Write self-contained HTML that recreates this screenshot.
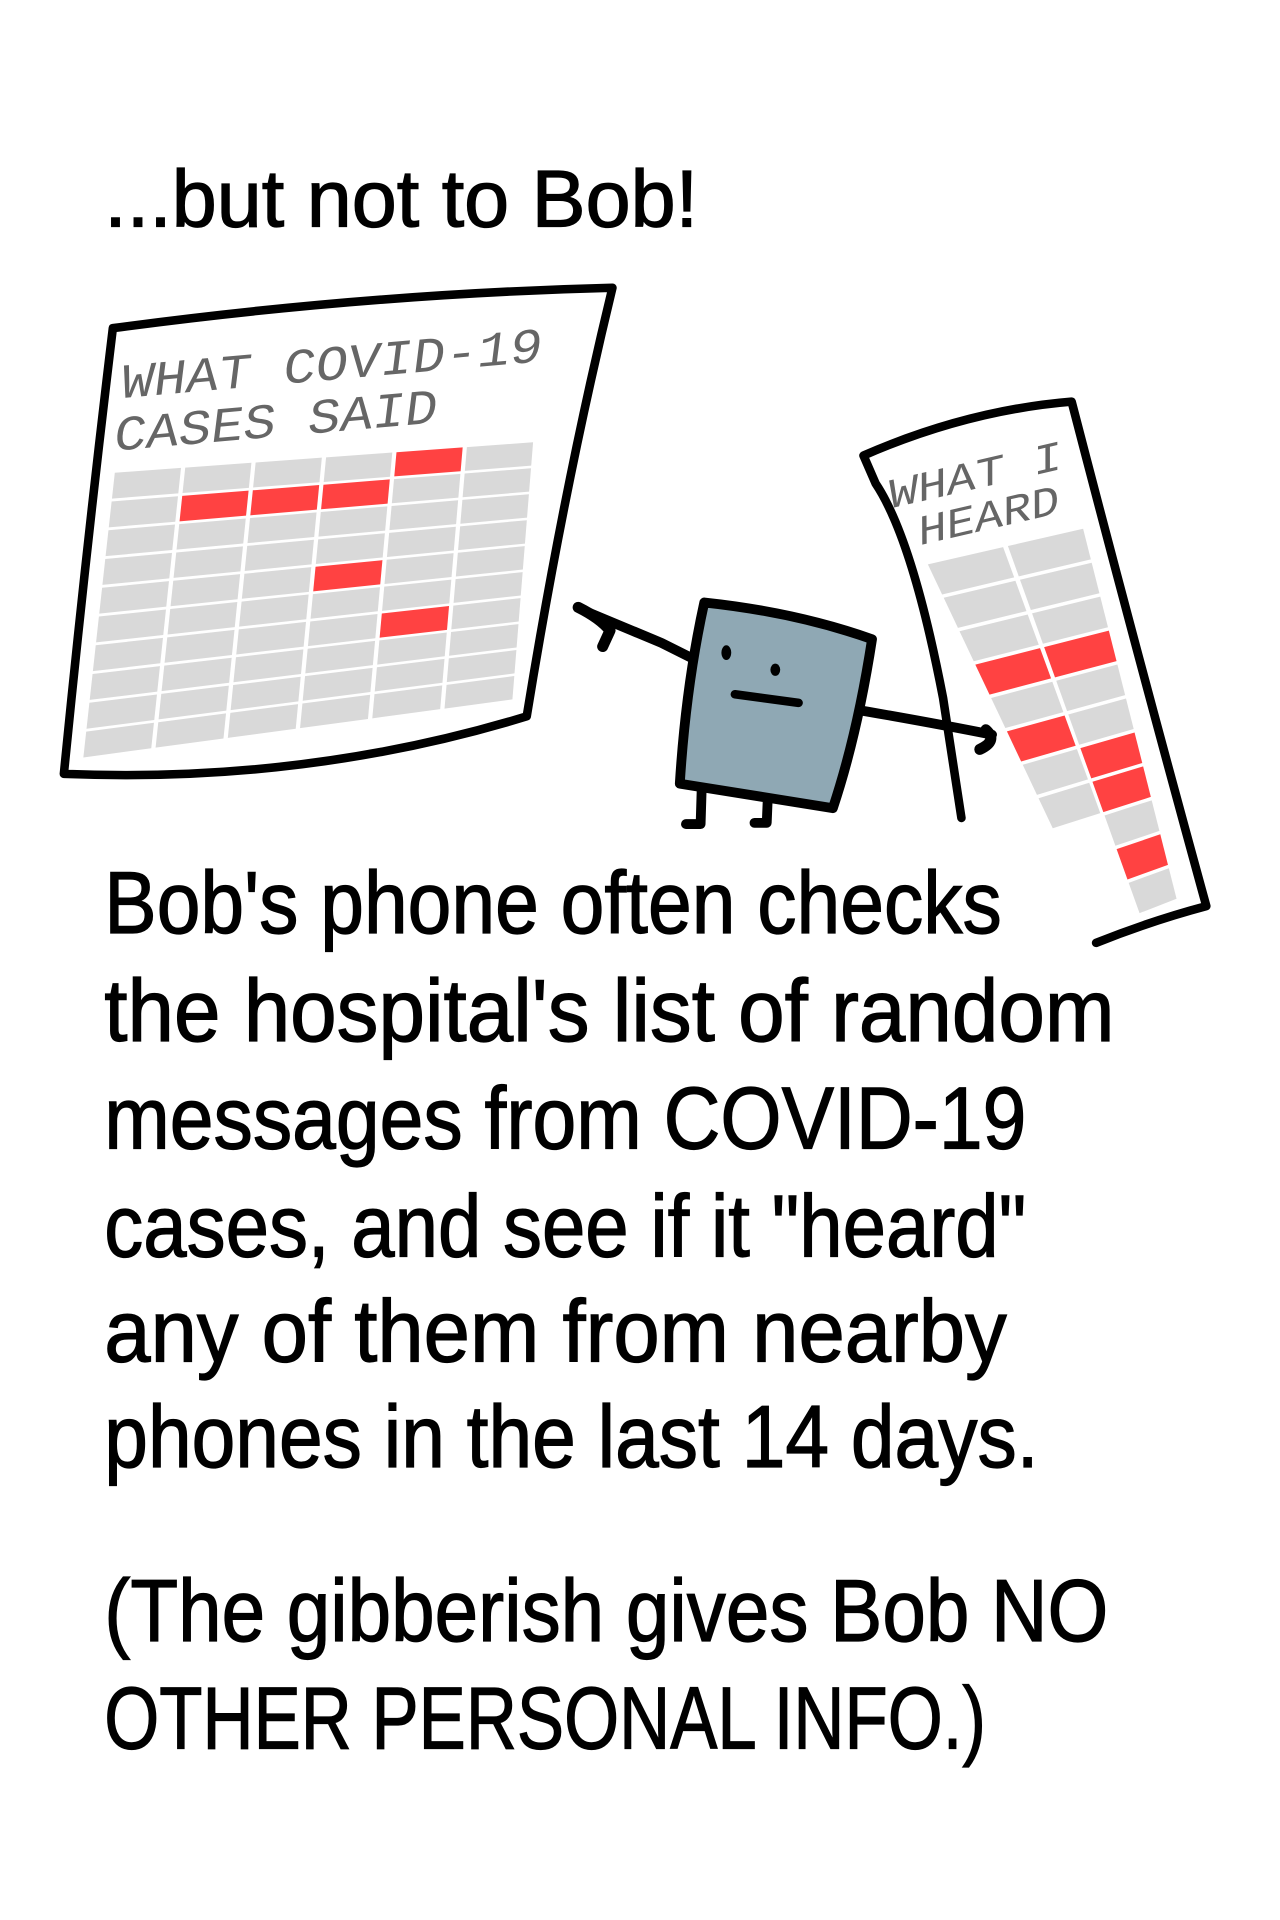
<!DOCTYPE html>
<html><head><meta charset="utf-8"><style>
html,body{margin:0;padding:0;background:#fff;}
svg{display:block}
text{font-family:"Liberation Sans Narrow","Liberation Sans",sans-serif;fill:#000}
.b text{stroke:#000;stroke-width:1}
.m{font-family:"Liberation Mono",monospace;font-style:italic;fill:#666}
</style></head><body>
<svg id="s" width="1280" height="1920" viewBox="0 0 1045 1568" xmlns="http://www.w3.org/2000/svg">
<g class="b"><text x="85" y="185" font-size="66" textLength="485" lengthAdjust="spacingAndGlyphs">...but not to Bob!</text></g>
<!-- left sheet -->
<path d="M92,268 Q300,240 500,235 Q460,400 430,585 Q250,640 52,632 Q70,450 92,268 Z" fill="#fff" stroke="#000" stroke-width="7" stroke-linejoin="round"/>
<g id="lg"></g>
<text class="m" x="100" y="325" font-size="40" transform="rotate(-5 100 325)" textLength="345" lengthAdjust="spacingAndGlyphs">WHAT COVID-19</text>
<text class="m" x="94" y="368" font-size="40" transform="rotate(-5 94 368)" textLength="265" lengthAdjust="spacingAndGlyphs">CASES SAID</text>
<!-- right sheet -->
<path d="M785,668 L770,570 Q745,440 715,395 L705,372 Q790,335 875,328 Q930,540 985,740 Q940,752 895,770 L860,700 Z" fill="#fff"/>
<path d="M785,668 L770,570 Q745,440 715,395 L705,372 Q790,335 875,328 Q930,540 985,740 Q940,752 895,770" fill="none" stroke="#000" stroke-width="7" stroke-linejoin="round" stroke-linecap="round"/>
<g id="rg"></g>
<text class="m" x="728" y="415" font-size="34" transform="rotate(-13 728 415)" textLength="145" lengthAdjust="spacingAndGlyphs">WHAT I</text>
<text class="m" x="752" y="445" font-size="34" transform="rotate(-13 752 445)" textLength="118" lengthAdjust="spacingAndGlyphs">HEARD</text>
<!-- phone -->
<g stroke="#000" stroke-linecap="round" stroke-linejoin="round" fill="none">
<path d="M570,540 L540,525 L480,500" stroke-width="8"/>
<path d="M472,496 Q490,505 498,515 L492,528" stroke-width="9"/>
<path d="M690,578 Q760,590 810,600" stroke-width="8"/>
<path d="M805,596 Q815,605 800,612" stroke-width="9"/>
<path d="M573,640 L572,673 L560,673" stroke-width="8"/>
<path d="M627,648 L626,672 L616,672" stroke-width="8"/>
<path d="M575,492 Q650,500 712,522 Q700,600 680,660 L555,640 Q560,560 575,492 Z" fill="#8fa8b4" stroke-width="8"/>
<line x1="600" y1="567" x2="652" y2="574" stroke-width="7"/>
</g>
<ellipse cx="593" cy="533" rx="4" ry="6"/>
<ellipse cx="633" cy="547" rx="4" ry="5"/>
<g font-size="72" class="b">
<text x="85" y="762" textLength="733" lengthAdjust="spacingAndGlyphs">Bob's phone often checks</text>
<text x="85" y="850" textLength="825" lengthAdjust="spacingAndGlyphs">the hospital's list of random</text>
<text x="85" y="938" textLength="753" lengthAdjust="spacingAndGlyphs">messages from COVID-19</text>
<text x="85" y="1026" textLength="753" lengthAdjust="spacingAndGlyphs">cases, and see if it "heard"</text>
<text x="85" y="1112" textLength="737" lengthAdjust="spacingAndGlyphs">any of them from nearby</text>
<text x="85" y="1198" textLength="763" lengthAdjust="spacingAndGlyphs">phones in the last 14 days.</text>
<text x="85" y="1340" textLength="820" lengthAdjust="spacingAndGlyphs">(The gibberish gives Bob NO</text>
<text x="85" y="1428" textLength="720" lengthAdjust="spacingAndGlyphs">OTHER PERSONAL INFO.)</text>
</g>
</svg>
<script>
function grid(id,TL,TR,BL,BR,cols,rows,red,skip){
 var g=document.getElementById(id),ns="http://www.w3.org/2000/svg";
 function P(u,v){return [ (TL[0]*(1-u)+TR[0]*u)*(1-v)+(BL[0]*(1-u)+BR[0]*u)*v,
   (TL[1]*(1-u)+TR[1]*u)*(1-v)+(BL[1]*(1-u)+BR[1]*u)*v];}
 var gx=0.06,gy=0.1;
 for(var r=0;r<rows;r++)for(var c=0;c<cols;c++){
  if(skip&&skip(c,r))continue;
  var u0=c/cols+gx/cols/2,u1=(c+1)/cols-gx/cols/2,v0=r/rows+gy/rows/2,v1=(r+1)/rows-gy/rows/2;
  var pts=[P(u0,v0),P(u1,v0),P(u1,v1),P(u0,v1)].map(function(p){return p.join(",")}).join(" ");
  var e=document.createElementNS(ns,"polygon");e.setAttribute("points",pts);
  e.setAttribute("fill",red.indexOf(c+","+r)>=0?"#ff4242":"#d9d9d9");g.appendChild(e);}
}
grid("lg",[92,385],[437,360],[66,620],[420,572],6,10,["4,0","1,1","2,1","3,1","3,4","4,6"]);
grid("rg",[755,460],[886,430],[898,760],[962,735],2,11,["0,3","1,3","0,5","1,6","1,7","1,9"],function(c,r){return c==0&&r>=8;});
</script>
</body></html>
